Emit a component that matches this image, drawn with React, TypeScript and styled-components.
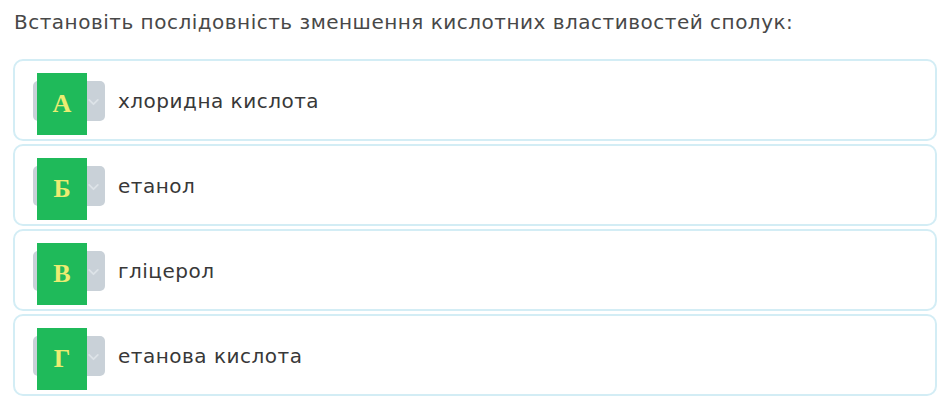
import { FC } from "react";
import styled, { createGlobalStyle } from "styled-components";

const GlobalStyle = createGlobalStyle`
  body {
    margin: 0;
    background: #ffffff;
    font-family: "DejaVu Sans", "Noto Sans", sans-serif;
  }
`;

const Page = styled.div`
  width: 940px;
  padding: 10px 3px 0 13px;
  box-sizing: border-box;
`;

const Question = styled.p`
  margin: 0 0 0 1px;
  font-size: 20px;
  letter-spacing: 0.5px;
  line-height: 24px;
  color: #484848;
`;

const Options = styled.div`
  display: flex;
  flex-direction: column;
  gap: 3px;
  margin-top: 25px;
`;

const OptionCard = styled.div`
  position: relative;
  display: flex;
  align-items: center;
  gap: 13px;
  height: 82px;
  padding: 0 0 0 18px;
  box-sizing: border-box;
  border: 2px solid #d3edf5;
  border-radius: 10px;
  background: #ffffff;
`;

const SelectBox = styled.div`
  position: relative;
  width: 72px;
  height: 40px;
  margin-top: 2px;
  border-radius: 5px;
  background: #c9d1d8;
  display: flex;
  align-items: center;
  justify-content: flex-end;
  padding-right: 5px;
  box-sizing: border-box;
`;

const Chevron: FC = () => (
  <svg width="13" height="13" viewBox="0 0 12 12" fill="none">
    <path d="M2 4.5 L6 8.5 L10 4.5" stroke="#dde3e8" strokeWidth="1.6" strokeLinecap="round" strokeLinejoin="round" />
  </svg>
);

const LetterTag = styled.div`
  position: absolute;
  left: 22px;
  top: 12px;
  width: 50px;
  height: 62px;
  background: #1fba5a;
  display: flex;
  align-items: center;
  justify-content: center;
  font-family: "Liberation Serif", "DejaVu Serif", serif;
  font-weight: 700;
  font-size: 26px;
  color: #ecec72;
`;

const OptionText = styled.span`
  font-size: 20px;
  letter-spacing: 0.5px;
  color: #383838;
  margin-top: 2px;
`;

const options = [
  { letter: "А", text: "хлоридна кислота" },
  { letter: "Б", text: "етанол" },
  { letter: "В", text: "гліцерол" },
  { letter: "Г", text: "етанова кислота" },
];

const App: FC = () => (
  <Page>
    <GlobalStyle />
    <Question>Встановіть послідовність зменшення кислотних властивостей сполук:</Question>
    <Options>
      {options.map((o) => (
        <OptionCard key={o.letter}>
          <SelectBox>
            <Chevron />
          </SelectBox>
          <LetterTag>{o.letter}</LetterTag>
          <OptionText>{o.text}</OptionText>
        </OptionCard>
      ))}
    </Options>
  </Page>
);

export default App;
